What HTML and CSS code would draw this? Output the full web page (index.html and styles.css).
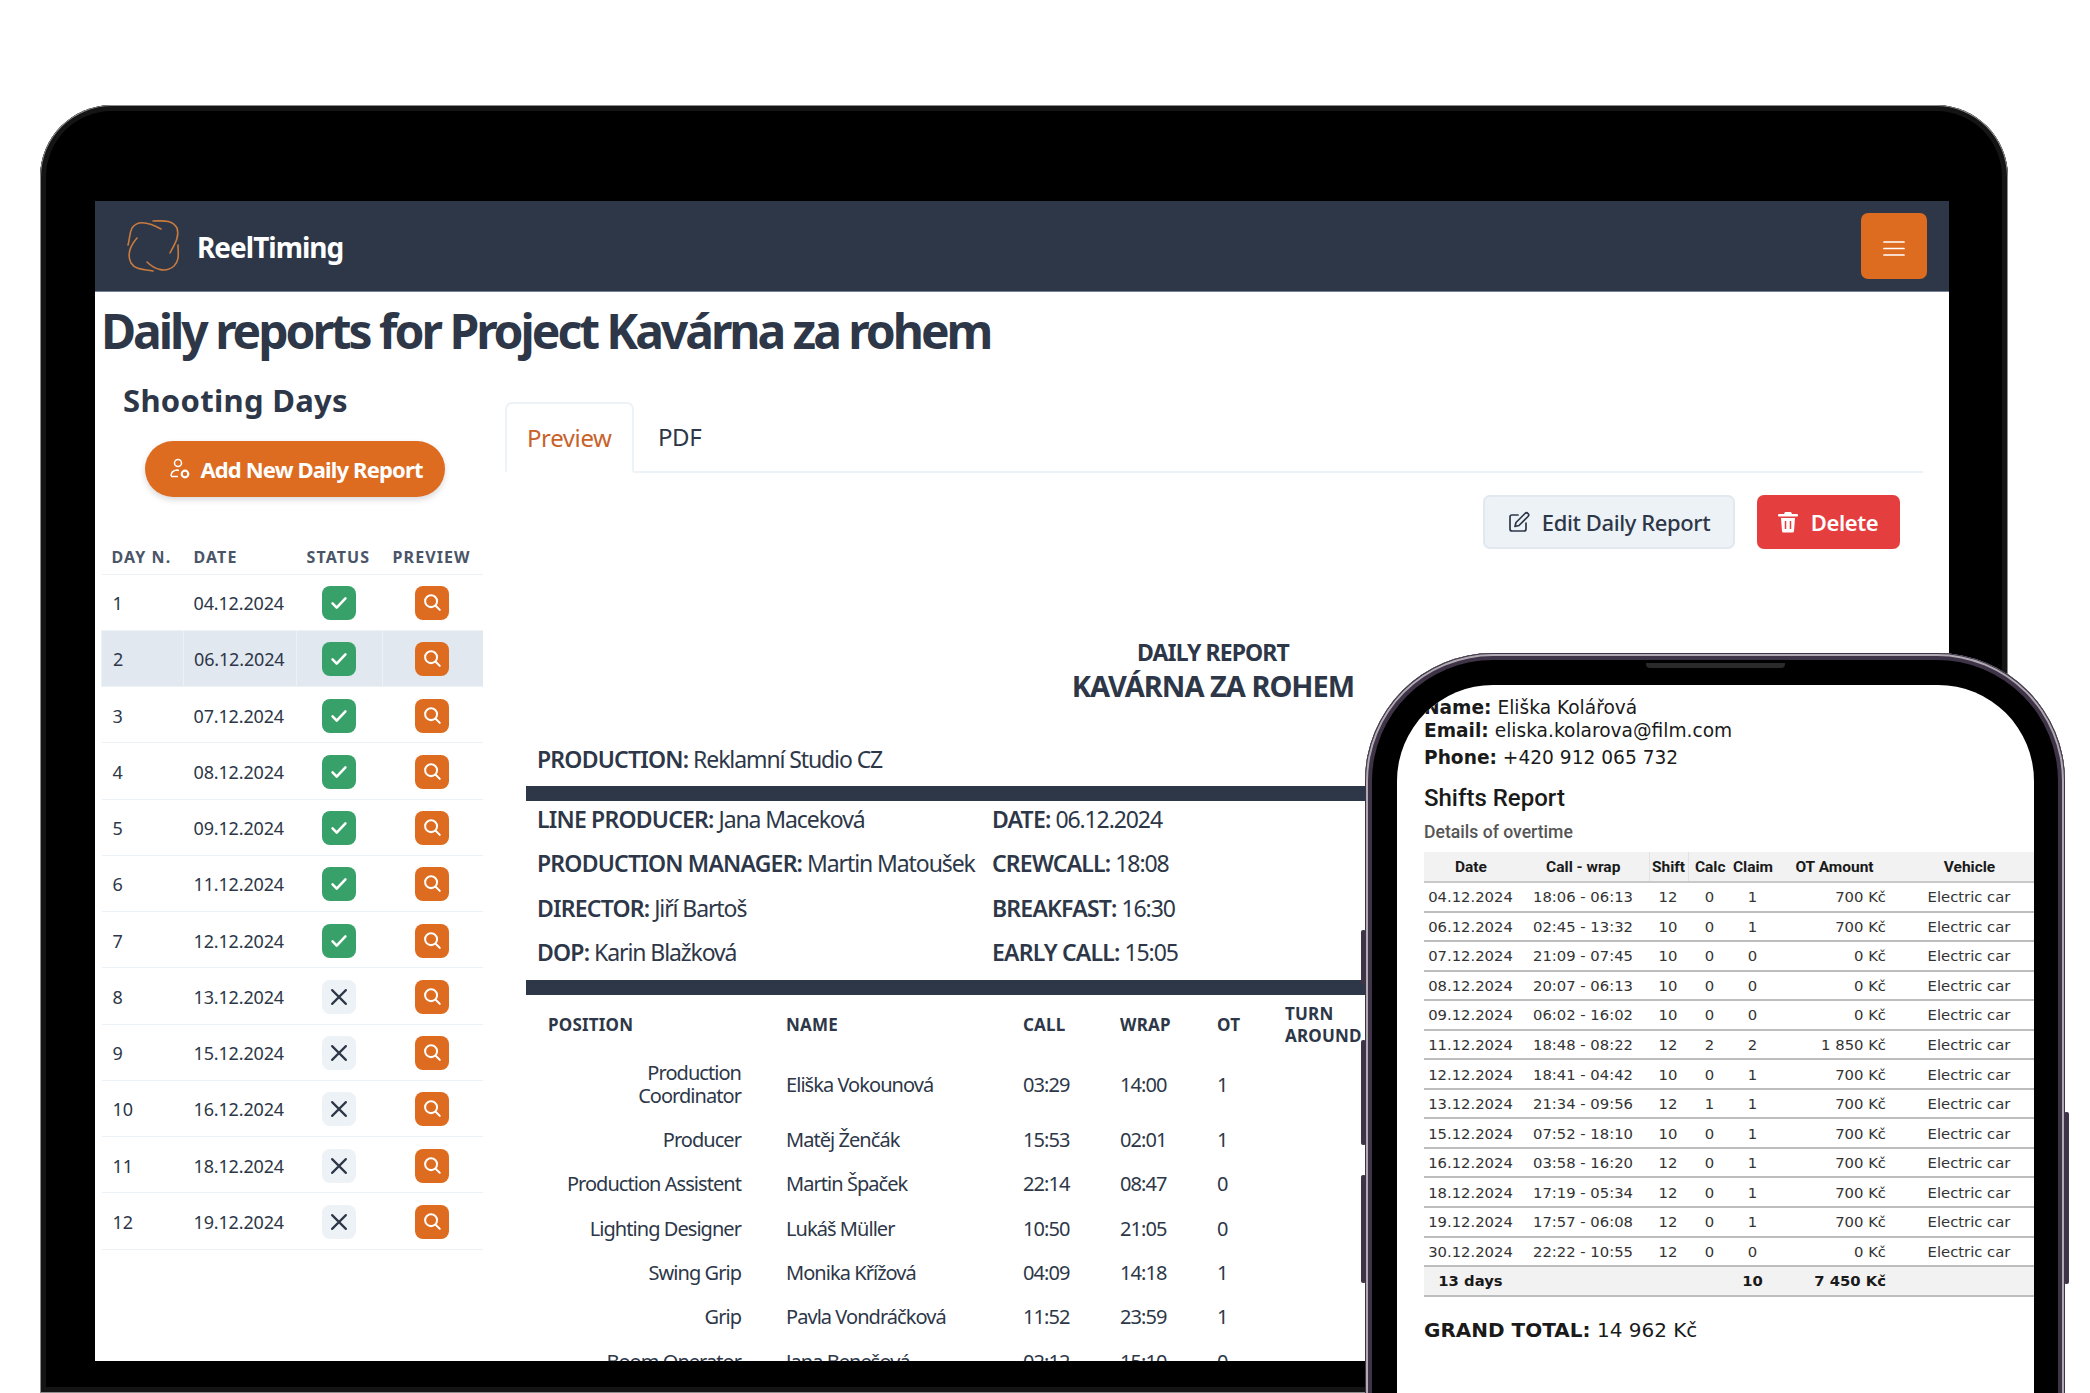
FILE: index.html
```html
<!DOCTYPE html>
<html>
<head>
    <title>ReelTiming</title>
    <link rel="stylesheet" href="styles.css">
</head>
<body>
    <svg class="sprites" width="0" height="0">
        <symbol id="i-check" viewBox="0 0 24 24"><path d="M5 12.500l4.500 4.500 9.500-10" fill="none" stroke="#fff" stroke-width="2.800" stroke-linecap="round" stroke-linejoin="round"/></symbol>
        <symbol id="i-x" viewBox="0 0 24 24"><path d="M4.500 4.500l15 15M19.500 4.500l-15 15" fill="none" stroke="#2d3748" stroke-width="2.400" stroke-linecap="round"/></symbol>
        <symbol id="i-search" viewBox="0 0 24 24"><circle cx="11" cy="10" r="6.500" fill="none" stroke="#fff" stroke-width="2.200"/><path d="M16 15l4.500 4.500" fill="none" stroke="#fff" stroke-width="2.200" stroke-linecap="round"/></symbol>
    </svg>

    <div class="stage">
        <div class="tablet">
            <div class="screen">
                <nav class="navbar">
                    <div class="brand">
                        <svg class="logo" viewBox="0 0 70 66" fill="none" stroke="#c97b3f" stroke-width="1.6" stroke-linecap="round">
                            <path d="M41 16C30 10 18 6 12 15C9 21 10 26 8 32"/>
                            <path d="M33 8C42 8 52 6 57 15C60 24 54 32 50 40"/>
                            <path d="M17 25C10 33 7 42 11 50C16 58 26 56 33 58"/>
                            <path d="M27 49C35 57 46 60 54 53C60 47 58 40 58 32"/>
                        </svg>
                        <span class="brand-name">ReelTiming</span>
                    </div>
                    <button class="menu-btn">
                        <svg width="22" height="16" viewBox="0 0 22 16" stroke="#fff" stroke-width="1.7" stroke-linecap="round"><path d="M1 2h20M1 8.500h20M1 15h20"/></svg>
                    </button>
                </nav>

                <h1 class="page-title">Daily reports for Project Kavárna za rohem</h1>

                <div class="main">
                    <aside class="sidebar">
                        <h2 class="side-title">Shooting Days</h2>
                        <button class="add-btn">
                            <svg width="22" height="22" viewBox="0 0 22 22" fill="none" stroke="#fff" stroke-width="1.5"><circle cx="9" cy="5" r="3.500"/><path d="M2 18c0-3 2-5.500 6-6l2 .5"/><path d="M2 18.500h7"/><circle cx="16" cy="16" r="3.300" stroke-width="2.200"/></svg>
                            Add New Daily Report
                        </button>
                        <table class="days">
                            <thead>
                                <tr><th class="c-day">Day N.</th><th class="c-date">Date</th><th class="c-status">Status</th><th class="c-prev">Preview</th></tr>
                            </thead>
                            <tbody>
                                <tr><td>1</td><td>04.12.2024</td><td><span class="badge ok"><svg><use href="#i-check"/></svg></span></td><td><span class="badge look"><svg><use href="#i-search"/></svg></span></td></tr>
                                <tr class="active"><td>2</td><td>06.12.2024</td><td><span class="badge ok"><svg><use href="#i-check"/></svg></span></td><td><span class="badge look"><svg><use href="#i-search"/></svg></span></td></tr>
                                <tr><td>3</td><td>07.12.2024</td><td><span class="badge ok"><svg><use href="#i-check"/></svg></span></td><td><span class="badge look"><svg><use href="#i-search"/></svg></span></td></tr>
                                <tr><td>4</td><td>08.12.2024</td><td><span class="badge ok"><svg><use href="#i-check"/></svg></span></td><td><span class="badge look"><svg><use href="#i-search"/></svg></span></td></tr>
                                <tr><td>5</td><td>09.12.2024</td><td><span class="badge ok"><svg><use href="#i-check"/></svg></span></td><td><span class="badge look"><svg><use href="#i-search"/></svg></span></td></tr>
                                <tr><td>6</td><td>11.12.2024</td><td><span class="badge ok"><svg><use href="#i-check"/></svg></span></td><td><span class="badge look"><svg><use href="#i-search"/></svg></span></td></tr>
                                <tr><td>7</td><td>12.12.2024</td><td><span class="badge ok"><svg><use href="#i-check"/></svg></span></td><td><span class="badge look"><svg><use href="#i-search"/></svg></span></td></tr>
                                <tr><td>8</td><td>13.12.2024</td><td><span class="badge no"><svg><use href="#i-x"/></svg></span></td><td><span class="badge look"><svg><use href="#i-search"/></svg></span></td></tr>
                                <tr><td>9</td><td>15.12.2024</td><td><span class="badge no"><svg><use href="#i-x"/></svg></span></td><td><span class="badge look"><svg><use href="#i-search"/></svg></span></td></tr>
                                <tr><td>10</td><td>16.12.2024</td><td><span class="badge no"><svg><use href="#i-x"/></svg></span></td><td><span class="badge look"><svg><use href="#i-search"/></svg></span></td></tr>
                                <tr><td>11</td><td>18.12.2024</td><td><span class="badge no"><svg><use href="#i-x"/></svg></span></td><td><span class="badge look"><svg><use href="#i-search"/></svg></span></td></tr>
                                <tr><td>12</td><td>19.12.2024</td><td><span class="badge no"><svg><use href="#i-x"/></svg></span></td><td><span class="badge look"><svg><use href="#i-search"/></svg></span></td></tr>
                            </tbody>
                        </table>
                    </aside>

                    <section class="content">
                        <div class="tabs">
                            <div class="tab selected">Preview</div>
                            <div class="tab">PDF</div>
                        </div>
                        <div class="actions">
                            <button class="btn btn-edit">
                                <svg width="22" height="22" viewBox="0 0 22 22" fill="none" stroke="#2d3748" stroke-width="1.7" stroke-linecap="round" stroke-linejoin="round"><path d="M10 4H4a2 2 0 0 0-2 2v12a2 2 0 0 0 2 2h12a2 2 0 0 0 2-2v-6"/><path d="M17 2.500a2 2 0 0 1 3 3L11 14.500l-4 1 1-4z"/></svg>
                                Edit Daily Report
                            </button>
                            <button class="btn btn-delete">
                                <svg width="20" height="22" viewBox="0 0 20 22" fill="#fff"><path d="M7 1h6l1 2h5a1 1 0 0 1 0 2.500H1A1 1 0 0 1 1 3h5z"/><path d="M3 7h14l-1 13a1.500 1.500 0 0 1-1.500 1.500h-9A1.500 1.500 0 0 1 4 20z"/><path d="M7.500 10v8M12.500 10v8" stroke="#e53e3e" stroke-width="1.500"/></svg>
                                Delete
                            </button>
                        </div>

                        <div class="report">
                            <div class="report-head">DAILY REPORT</div>
                            <div class="report-name">KAVÁRNA ZA ROHEM</div>
                            <p class="report-line"><b>PRODUCTION:</b> Reklamní Studio CZ</p>
                            <div class="rule"></div>
                            <div class="report-grid">
                                <p><b>LINE PRODUCER:</b> Jana Maceková</p><p><b>DATE:</b> 06.12.2024</p>
                                <p><b>PRODUCTION MANAGER:</b> Martin Matoušek</p><p><b>CREWCALL:</b> 18:08</p>
                                <p><b>DIRECTOR:</b> Jiří Bartoš</p><p><b>BREAKFAST:</b> 16:30</p>
                                <p><b>DOP:</b> Karin Blažková</p><p><b>EARLY CALL:</b> 15:05</p>
                            </div>
                            <div class="rule rule-low"></div>
                            <table class="crew">
                                <thead>
                                    <tr><th class="w-pos">POSITION</th><th class="w-name">NAME</th><th class="w-time">CALL</th><th class="w-time">WRAP</th><th class="w-ot">OT</th><th class="w-turn">TURN<br>AROUND</th></tr>
                                </thead>
                                <tbody>
                                    <tr class="tall"><td class="pos">Production<br>Coordinator</td><td>Eliška Vokounová</td><td>03:29</td><td>14:00</td><td>1</td><td></td></tr>
                                    <tr><td class="pos">Producer</td><td>Matěj Ženčák</td><td>15:53</td><td>02:01</td><td>1</td><td></td></tr>
                                    <tr><td class="pos">Production Assistent</td><td>Martin Špaček</td><td>22:14</td><td>08:47</td><td>0</td><td></td></tr>
                                    <tr><td class="pos">Lighting Designer</td><td>Lukáš Müller</td><td>10:50</td><td>21:05</td><td>0</td><td></td></tr>
                                    <tr><td class="pos">Swing Grip</td><td>Monika Křížová</td><td>04:09</td><td>14:18</td><td>1</td><td></td></tr>
                                    <tr><td class="pos">Grip</td><td>Pavla Vondráčková</td><td>11:52</td><td>23:59</td><td>1</td><td></td></tr>
                                    <tr><td class="pos">Boom Operator</td><td>Jana Benešová</td><td>02:12</td><td>15:10</td><td>0</td><td></td></tr>
                                </tbody>
                            </table>
                        </div>
                    </section>
                </div>
            </div>
        </div>

        <!-- telefon lezi pres tablet -->
        <div class="phone">
            <span class="side-key key-mute"></span>
            <span class="side-key key-up"></span>
            <span class="side-key key-down"></span>
            <span class="side-key key-power"></span>
            <span class="speaker"></span>
            <div class="phone-screen">
                <p class="who"><b>Name:</b> Eliška Kolářová</p>
                <p class="who"><b>Email:</b> eliska.kolarova@film.com</p>
                <p class="who who-phone"><b>Phone:</b> +420 912 065 732</p>
                <h3 class="shifts-title">Shifts Report</h3>
                <p class="shifts-sub">Details of overtime</p>
                <table class="shifts">
                    <thead>
                        <tr><th class="s-date">Date</th><th class="s-call">Call - wrap</th><th class="s-shift">Shift</th><th class="s-calc">Calc</th><th class="s-claim">Claim</th><th class="s-ot">OT Amount</th><th class="s-veh">Vehicle</th></tr>
                    </thead>
                    <tbody>
                        <tr><td>04.12.2024</td><td>18:06 - 06:13</td><td>12</td><td>0</td><td>1</td><td class="amt">700 Kč</td><td>Electric car</td></tr>
                        <tr><td>06.12.2024</td><td>02:45 - 13:32</td><td>10</td><td>0</td><td>1</td><td class="amt">700 Kč</td><td>Electric car</td></tr>
                        <tr><td>07.12.2024</td><td>21:09 - 07:45</td><td>10</td><td>0</td><td>0</td><td class="amt">0 Kč</td><td>Electric car</td></tr>
                        <tr><td>08.12.2024</td><td>20:07 - 06:13</td><td>10</td><td>0</td><td>0</td><td class="amt">0 Kč</td><td>Electric car</td></tr>
                        <tr><td>09.12.2024</td><td>06:02 - 16:02</td><td>10</td><td>0</td><td>0</td><td class="amt">0 Kč</td><td>Electric car</td></tr>
                        <tr><td>11.12.2024</td><td>18:48 - 08:22</td><td>12</td><td>2</td><td>2</td><td class="amt">1 850 Kč</td><td>Electric car</td></tr>
                        <tr><td>12.12.2024</td><td>18:41 - 04:42</td><td>10</td><td>0</td><td>1</td><td class="amt">700 Kč</td><td>Electric car</td></tr>
                        <tr><td>13.12.2024</td><td>21:34 - 09:56</td><td>12</td><td>1</td><td>1</td><td class="amt">700 Kč</td><td>Electric car</td></tr>
                        <tr><td>15.12.2024</td><td>07:52 - 18:10</td><td>10</td><td>0</td><td>1</td><td class="amt">700 Kč</td><td>Electric car</td></tr>
                        <tr><td>16.12.2024</td><td>03:58 - 16:20</td><td>12</td><td>0</td><td>1</td><td class="amt">700 Kč</td><td>Electric car</td></tr>
                        <tr><td>18.12.2024</td><td>17:19 - 05:34</td><td>12</td><td>0</td><td>1</td><td class="amt">700 Kč</td><td>Electric car</td></tr>
                        <tr><td>19.12.2024</td><td>17:57 - 06:08</td><td>12</td><td>0</td><td>1</td><td class="amt">700 Kč</td><td>Electric car</td></tr>
                        <tr><td>30.12.2024</td><td>22:22 - 10:55</td><td>12</td><td>0</td><td>0</td><td class="amt">0 Kč</td><td>Electric car</td></tr>
                        <tr class="sum"><td>13 days</td><td></td><td></td><td></td><td>10</td><td class="amt">7 450 Kč</td><td></td></tr>
                    </tbody>
                </table>
                <p class="grand"><b>GRAND TOTAL:</b> 14 962 Kč</p>
            </div>
        </div>
    </div>
</body>
</html>
```

FILE: styles.css
```css
* {
    box-sizing: border-box;
}

html, body {
    margin: 0;
    height: 1393px;
    overflow: hidden;
    background: #fff;
}

body {
    font-family: "Noto Sans", "Open Sans", sans-serif;
    color: #2d3748;
}

p, h1, h2, h3 {
    margin: 0;
}

button {
    font-family: inherit;
    border: 0;
}

.sprites {
    position: absolute;
}

.stage {
    position: relative;
    height: 1393px;
    overflow: hidden;
}

/* tablet */
.tablet {
    width: 1968px;
    height: 1288px;
    margin: 105px 0 0 40px;
    padding: 96px 59px 0 55px;
    background: #000;
    border-radius: 72px 72px 0 0;
    box-shadow: inset 0 0 0 1px #8c8c8c, inset 0 0 0 6px #141414;
}

.screen {
    width: 1854px;
    height: 1160px;
    background: #fff;
    overflow: hidden;
}

.navbar {
    height: 91px;
    padding: 0 22px 0 25px;
    display: flex;
    align-items: center;
    justify-content: space-between;
    background: #2d3748;
    border-bottom: 1px solid #718096;
}

.brand {
    display: flex;
    align-items: center;
    gap: 7px;
}

.logo {
    width: 70px;
    height: 66px;
}

.brand-name {
    color: #fff;
    font-size: 28px;
    font-weight: 700;
    letter-spacing: -1px;
    padding-top: 2px;
}

.menu-btn {
    width: 66px;
    height: 66px;
    padding-top: 8px;
    background: #dd6b20;
    border-radius: 7px;
}

.page-title {
    height: 88px;
    padding: 0 0 0 6px;
    font-size: 48px;
    line-height: 78px;
    font-weight: 700;
    letter-spacing: -3.05px;
    white-space: nowrap;
}

.main {
    display: flex;
}

/* levy sloupec */
.sidebar {
    width: 410px;
    flex: none;
    padding-left: 6px;
}

.side-title {
    height: 42px;
    padding-left: 22px;
    font-size: 31px;
    line-height: 40px;
    font-weight: 700;
    letter-spacing: .3px;
}

.add-btn {
    width: 300px;
    height: 56px;
    margin: 19px 0 0 44px;
    padding-left: 8px;
    display: flex;
    align-items: center;
    justify-content: center;
    gap: 9px;
    background: #dd6b20;
    color: #fff;
    font-size: 22px;
    font-weight: 700;
    letter-spacing: -.85px;
    border-radius: 28px;
    box-shadow: 0 3px 6px rgba(0, 0, 0, .15);
}

.days {
    width: 381px;
    margin-top: 43px;
    border-collapse: collapse;
    table-layout: fixed;
}

.days th {
    height: 34px;
    padding: 0 0 0 10px;
    text-align: left;
    font-size: 16px;
    font-weight: 700;
    letter-spacing: 1.1px;
    color: #4a5568;
    text-transform: uppercase;
    white-space: nowrap;
    border-bottom: 1px solid #edf2f7;
}

.c-day { width: 82px; }
.c-date { width: 113px; }
.c-status { width: 86px; }
.c-prev { width: 100px; }

.days td {
    height: 56.25px;
    padding: 2px 0 0 11px;
    font-size: 18px;
    letter-spacing: -.15px;
    border-bottom: 1px solid #edf2f7;
}

.days td:nth-child(2) {
    padding-left: 10px;
}

.days td:nth-child(n+3) {
    padding: 2px 2px 0 0;
    text-align: center;
}

.days .active td {
    background: #e2e8f0;
    border-left: 1px solid #edf2f7;
}

.badge {
    width: 34px;
    height: 34px;
    display: inline-flex;
    align-items: center;
    justify-content: center;
    border-radius: 8px;
    vertical-align: middle;
}

.badge svg {
    width: 22px;
    height: 22px;
}

.ok { background: #38a169; }
.look { background: #dd6b20; }
.no { background: #edf2f7; }

/* report */
.content {
    width: 1418px;
    flex: none;
    margin-top: 22px;
}

.tabs {
    height: 71px;
    display: flex;
    border-bottom: 2px solid #edf2f7;
}

.tab {
    padding: 0 22px 0 24px;
    height: 71px;
    line-height: 70px;
    font-size: 24px;
    letter-spacing: -.4px;
}

.tab.selected {
    width: 129px;
    padding-left: 20px;
    color: #c9622a;
    line-height: 68px;
    border: 2px solid #edf2f7;
    border-bottom: 2px solid #fff;
    border-radius: 7px 7px 0 0;
}

.actions {
    display: flex;
    justify-content: flex-end;
    gap: 22px;
    margin: 22px 23px 0 0;
}

.btn {
    height: 54px;
    display: flex;
    align-items: center;
    justify-content: center;
    gap: 12px;
    font-size: 22px;
    font-weight: 500;
    letter-spacing: -.4px;
    border-radius: 7px;
}

.btn-edit {
    width: 252px;
    color: #2d3748;
    background: #edf2f7;
    border: 2px solid #e2e8f0;
}

.btn-delete {
    width: 143px;
    gap: 13px;
    padding-left: 5px;
    color: #fff;
    font-weight: 600;
    background: #e53e3e;
}

.report {
    margin: 87px 23px 0 21px;
}

.report-head {
    height: 32px;
    text-align: center;
    font-size: 23px;
    line-height: 32px;
    font-weight: 700;
    letter-spacing: -.9px;
}

.report-name {
    height: 36px;
    text-align: center;
    font-size: 29px;
    line-height: 36px;
    font-weight: 700;
    letter-spacing: -1px;
}

.report-line {
    margin-top: 39px;
    padding-left: 11px;
    font-size: 23px;
    line-height: 32px;
    letter-spacing: -1.1px;
}

.report-line b, .report-grid b {
    font-weight: 600;
    letter-spacing: -.8px;
}

.rule {
    height: 15px;
    margin-top: 11px;
    background: #2d3748;
}

.rule-low {
    height: 15px;
    margin-top: 9px;
}

.report-grid {
    display: grid;
    grid-template-columns: 455px 1fr;
    row-gap: 6.3px;
    margin-top: -1px;
    padding-left: 11px;
    font-size: 23px;
    line-height: 38px;
    letter-spacing: -1.1px;
}

.crew {
    width: 1374px;
    border-collapse: collapse;
    table-layout: fixed;
}

.crew th {
    height: 57px;
    padding: 4px 0 0 22px;
    text-align: left;
    font-size: 17px;
    line-height: 22px;
    font-weight: 700;
    letter-spacing: .2px;
}

.w-pos { width: 238px; }
.w-name { width: 237px; }
.w-time { width: 97px; }
.w-ot { width: 68px; }

.crew td {
    height: 44.3px;
    padding: 0 0 1px 22px;
    font-size: 20px;
    line-height: 23px;
    letter-spacing: -.95px;
}

.crew .tall td {
    height: 66px;
}

.crew .pos {
    padding: 0 23px 1px 0;
    text-align: right;
}

/* telefon */
.phone {
    position: absolute;
    left: 1365px;
    top: 653px;
    width: 700px;
    height: 800px;
    padding: 32px 31px 0 32px;
    background: #000;
    border-radius: 128px 128px 0 0;
    box-shadow: inset 0 0 0 1px #3f3447, inset 0 0 0 3px #b0abb2, inset 0 0 0 7px #3f3447;
}

.side-key {
    position: absolute;
    width: 5px;
    background: #3f3447;
    border-radius: 2px;
}

.key-mute { left: -4px; top: 277px; height: 55px; }
.key-up { left: -4px; top: 387px; height: 105px; }
.key-down { left: -4px; top: 522px; height: 108px; }
.key-power { right: -4px; top: 459px; height: 172px; }

.speaker {
    position: absolute;
    left: 281px;
    top: 10px;
    width: 139px;
    height: 5px;
    background: #2a2a2a;
    border-radius: 0 0 4px 4px;
}

.phone-screen {
    height: 100%;
    padding: 11px 0 0 27px;
    background: #fff;
    color: #1a1a1a;
    border-radius: 96px 96px 0 0;
    overflow: hidden;
    font-family: "DejaVu Sans", sans-serif;
}

.who {
    font-size: 18.6px;
    line-height: 23px;
    white-space: nowrap;
}

.who-phone {
    margin-top: 4px;
}

.shifts-title {
    margin-top: 13px;
    font-family: "Roboto", "Liberation Sans", sans-serif;
    font-size: 24px;
    line-height: 32px;
    font-weight: 500;
}

.shifts-sub {
    margin-top: 7px;
    font-family: "Roboto", "Liberation Sans", sans-serif;
    font-size: 17.6px;
    line-height: 22px;
    font-weight: 500;
    color: #555;
}

.shifts {
    width: 610px;
    margin-top: 9px;
    border-collapse: collapse;
    table-layout: fixed;
}

.shifts th {
    height: 30px;
    padding: 0;
    background: #f2f2f2;
    font-family: "Roboto", "Liberation Sans", sans-serif;
    font-size: 15.5px;
    font-weight: 700;
    border-bottom: 2px solid #c8c8c8;
}

.s-date { width: 94px; }
.s-call { width: 131px; }
.s-shift { width: 39px; border-left: 1px solid #e2e2e2; border-right: 1px solid #e2e2e2; }
.s-calc { width: 44px; }
.s-claim { width: 42px; }
.s-ot { width: 131px; }
.s-veh { width: 129px; }

.shifts th.s-ot {
    padding-right: 10px;
}

.shifts td {
    height: 29.55px;
    padding: 0 1px 0 0;
    text-align: center;
    font-size: 14.8px;
    white-space: nowrap;
    color: #333;
    border-bottom: 2px solid #bdbdbd;
}

.shifts td.amt {
    padding-right: 19px;
    text-align: right;
}

.shifts .sum td {
    font-weight: 700;
    color: #1a1a1a;
    background: #f2f2f2;
}

.grand {
    margin-top: 19px;
    font-size: 20px;
    line-height: 28px;
    white-space: nowrap;
}
```
